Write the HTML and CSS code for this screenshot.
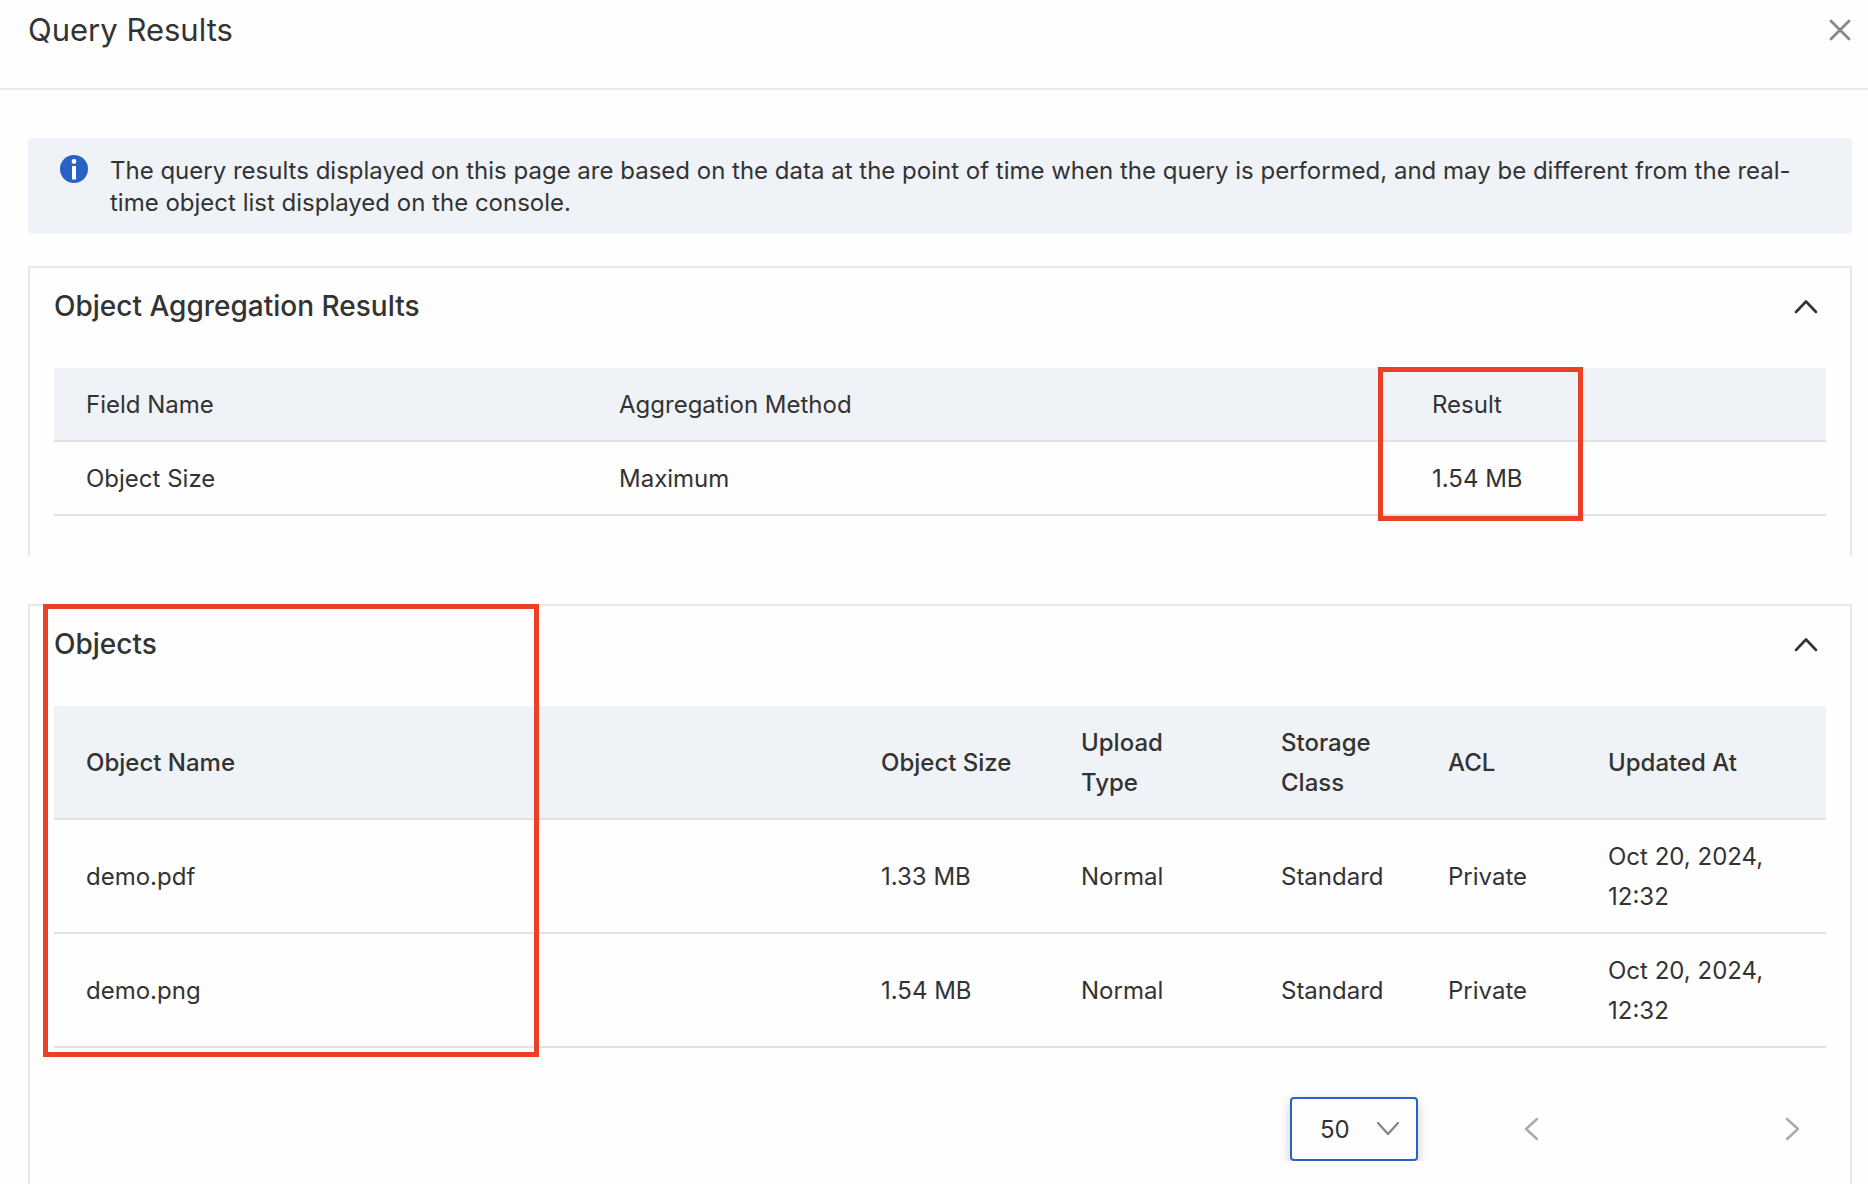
FILE: index.html
```html
<!DOCTYPE html>
<html lang="en">
<head>
<meta charset="utf-8">
<meta name="viewport" content="width=device-width, initial-scale=1">
<title>Query Results</title>
<link rel="stylesheet" href="styles.css">
</head>
<body>
<header class="panel-header">
  <h1 class="panel-title">Query Results</h1>
  <button class="icon-button close-button" type="button" aria-label="Close">
    <svg width="24" height="24" viewBox="0 0 24 24" fill="none" stroke="currentColor" stroke-width="2.8" stroke-linecap="round" aria-hidden="true"><path d="M3 3l18 18M21 3L3 21"/></svg>
  </button>
</header>

<main class="panel-body">
  <div class="notice" role="note">
    <svg class="notice-icon" width="28" height="28" viewBox="0 0 28 28" aria-hidden="true">
      <circle cx="14" cy="14" r="14" fill="#2962c4"/>
      <circle cx="14" cy="6.5" r="2.4" fill="#fff"/>
      <rect x="12" y="11" width="4" height="13.5" fill="#fff"/>
    </svg>
    <p class="notice-text">The query results displayed on this page are based on the data at the point of time when the query is performed, and may be different from the real-time object list displayed on the console.</p>
  </div>

  <section class="card card-aggregation">
    <div class="card-header">
      <h2 class="card-title">Object Aggregation Results</h2>
      <button class="icon-button" type="button" aria-label="Collapse Object Aggregation Results" aria-expanded="true">
        <svg width="24" height="24" viewBox="0 0 24 24" fill="none" stroke="currentColor" stroke-width="2.6" stroke-linecap="round" stroke-linejoin="round" aria-hidden="true"><path d="M2 18L12 7.500l10 10.500"/></svg>
      </button>
    </div>
    <table class="data-table aggregation-table">
      <colgroup><col class="col-field"><col><col class="col-result"></colgroup>
      <thead>
        <tr><th scope="col">Field Name</th><th scope="col">Aggregation Method</th><th scope="col" class="marked-cell">Result<span class="mark mark-result"></span></th></tr>
      </thead>
      <tbody>
        <tr><td>Object Size</td><td>Maximum</td><td>1.54 MB</td></tr>
      </tbody>
    </table>
  </section>

  <section class="card card-objects">
    <span class="mark mark-objects"></span>
    <div class="card-header">
      <h2 class="card-title">Objects</h2>
      <button class="icon-button" type="button" aria-label="Collapse Objects" aria-expanded="true">
        <svg width="24" height="24" viewBox="0 0 24 24" fill="none" stroke="currentColor" stroke-width="2.6" stroke-linecap="round" stroke-linejoin="round" aria-hidden="true"><path d="M2 18L12 7.500l10 10.500"/></svg>
      </button>
    </div>
    <table class="data-table objects-table">
      <colgroup><col><col class="col-size"><col class="col-upload"><col class="col-storage"><col class="col-acl"><col class="col-updated"></colgroup>
      <thead>
        <tr><th scope="col">Object Name</th><th scope="col">Object Size</th><th scope="col">Upload Type</th><th scope="col">Storage Class</th><th scope="col">ACL</th><th scope="col">Updated At</th></tr>
      </thead>
      <tbody>
        <tr><td>demo.pdf</td><td>1.33 MB</td><td>Normal</td><td>Standard</td><td>Private</td><td>Oct 20, 2024, 12:32</td></tr>
        <tr><td>demo.png</td><td>1.54 MB</td><td>Normal</td><td>Standard</td><td>Private</td><td>Oct 20, 2024, 12:32</td></tr>
      </tbody>
    </table>
    <nav class="pager" aria-label="Pagination">
      <div class="page-size">
        <select class="page-size-select" aria-label="Objects per page">
          <option>20</option>
          <option selected>50</option>
          <option>100</option>
        </select>
        <svg class="page-size-arrow" width="24" height="24" viewBox="0 0 24 24" fill="none" stroke="currentColor" stroke-width="2.4" stroke-linecap="round" stroke-linejoin="round" aria-hidden="true"><path d="M2 6l10 11L22 6"/></svg>
      </div>
      <div class="pager-steps">
        <button class="icon-button" type="button" aria-label="Previous page">
          <svg width="24" height="24" viewBox="0 0 24 24" fill="none" stroke="currentColor" stroke-width="2.4" stroke-linecap="round" stroke-linejoin="round" aria-hidden="true"><path d="M18 2L7 12l11 10"/></svg>
        </button>
        <button class="icon-button" type="button" aria-label="Next page">
          <svg width="24" height="24" viewBox="0 0 24 24" fill="none" stroke="currentColor" stroke-width="2.4" stroke-linecap="round" stroke-linejoin="round" aria-hidden="true"><path d="M6 2l11 10L6 22"/></svg>
        </button>
      </div>
    </nav>
  </section>
</main>
</body>
</html>
```
FILE: styles.css
```css
*,
*::before,
*::after {
  box-sizing: border-box;
}

body {
  display: flex;
  flex-direction: column;
  min-height: 100vh;
  margin: 0;
  background: #fefefe;
  color: #333;
  font-family: Inter, "Liberation Sans", sans-serif;
  font-size: 24px;
  line-height: 40px;
}

h1,
h2,
p {
  margin: 0;
}

.icon-button {
  display: flex;
  padding: 0;
  border: 0;
  background: none;
  color: inherit;
  cursor: pointer;
}

.panel-header {
  display: flex;
  justify-content: space-between;
  align-items: center;
  padding: 10px 16px 38px 28px;
  border-bottom: 2px solid #e8e8e8;
}

.panel-title {
  font-size: 31px;
  font-weight: 400;
  line-height: 40px;
}

.close-button {
  color: #888;
}

.panel-body {
  display: flex;
  flex: 1;
  flex-direction: column;
  padding: 48px 16px 0 28px;
}

.notice {
  display: flex;
  gap: 22px;
  padding: 17px 32px 15px;
  border-radius: 4px;
  background: #eff2f7;
}

.notice-icon {
  flex: none;
}

.notice-text {
  line-height: 32px;
}

.card {
  position: relative;
  padding: 0 24px;
  border: 2px solid #e8e8e8;
  border-bottom: 0;
}

.card-aggregation {
  margin-top: 32px;
  padding-bottom: 40px;
}

.card-objects {
  flex: 1;
  margin-top: 48px;
}

.card-header {
  display: flex;
  justify-content: space-between;
  align-items: center;
  padding: 18px 8px 42px 0;
}

.card-title {
  font-size: 28px;
  font-weight: 500;
  line-height: 40px;
}

.data-table {
  width: 100%;
  border-collapse: separate;
  border-spacing: 0;
  table-layout: fixed;
}

.data-table th,
.data-table td {
  padding: 17px 32px 15px;
  border-bottom: 2px solid #e2e2e2;
  font-weight: 400;
  text-align: left;
  vertical-align: middle;
}

.data-table th {
  background: #eff2f7;
}

.objects-table th {
  font-weight: 500;
}

.col-field {
  width: 533px;
}

.col-result {
  width: 426px;
}

.col-size,
.col-upload {
  width: 200px;
}

.col-storage {
  width: 167px;
}

.col-acl {
  width: 160px;
}

.col-updated {
  width: 250px;
}

.marked-cell {
  position: relative;
}

/* Red call-out frames laid over the tables */
.mark {
  position: absolute;
  z-index: 1;
  border: 5px solid #ec4026;
  pointer-events: none;
}

.mark-result {
  top: -1px;
  left: -22px;
  width: 205px;
  height: 154px;
}

.mark-objects {
  top: -2px;
  left: 13px;
  width: 496px;
  height: 453px;
}

.pager {
  display: flex;
  justify-content: flex-end;
  align-items: center;
  gap: 101px;
  padding: 49px 21px 22px 0;
}

.page-size {
  position: relative;
  width: 128px;
  clip-path: inset(-20px -20px 0);
}

.page-size-select {
  display: block;
  width: 100%;
  height: 64px;
  padding: 2px 28px 0;
  border: 2px solid #2962c4;
  border-radius: 4px;
  background: #fefefe;
  box-shadow: 0 4px 12px rgba(0, 0, 0, 0.2);
  color: #333;
  font: inherit;
  appearance: none;
}

.page-size-arrow {
  position: absolute;
  top: 20px;
  right: 18px;
  color: #888;
  pointer-events: none;
}

.pager-steps {
  display: flex;
  justify-content: space-between;
  width: 286px;
  color: #aaa;
}
```
